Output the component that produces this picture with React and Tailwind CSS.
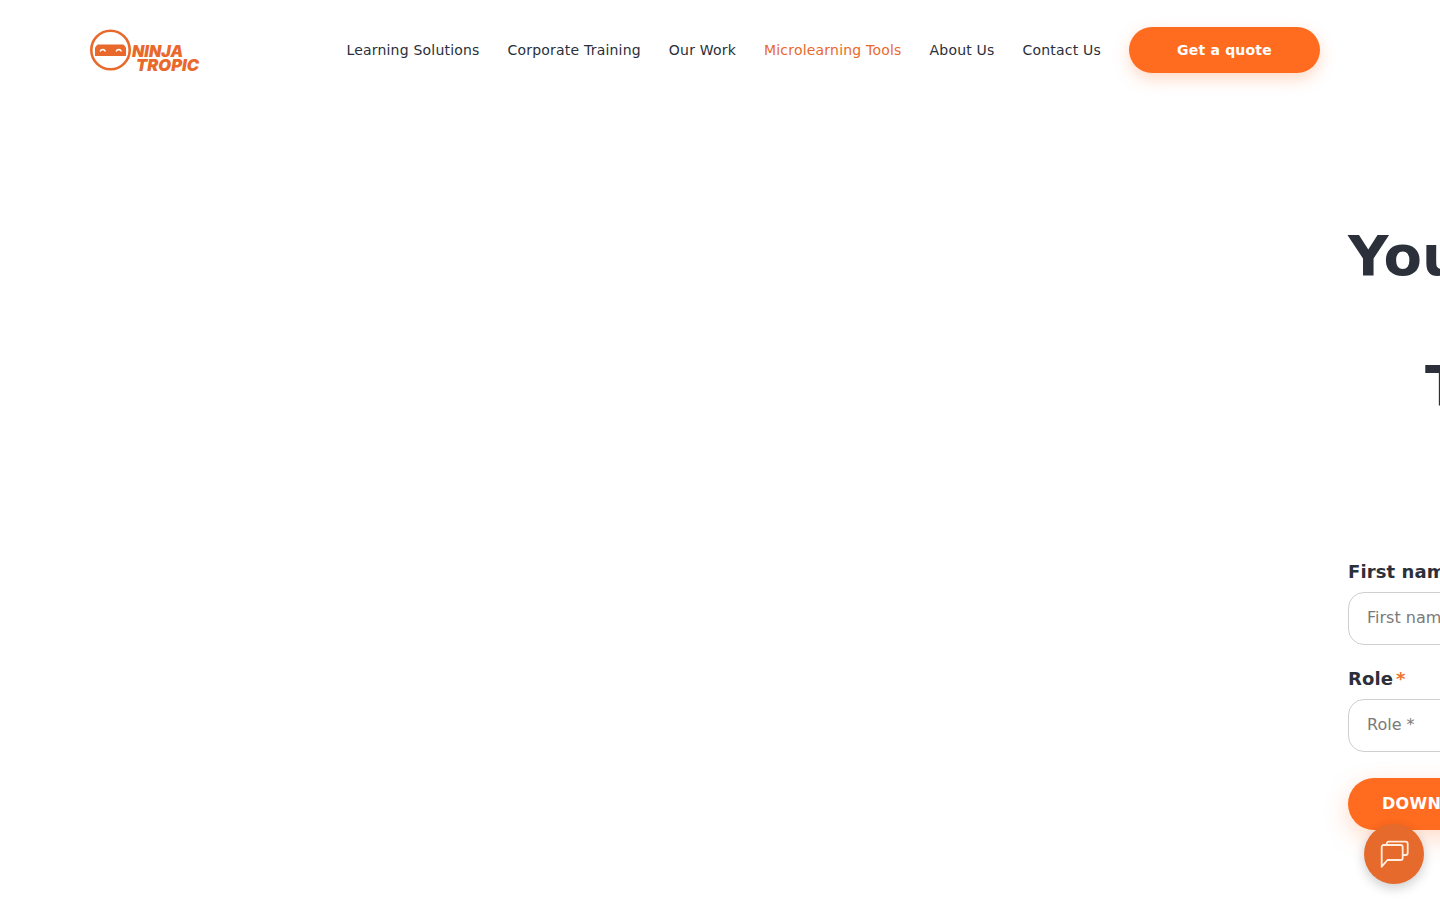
const sans = "font-['DejaVu_Sans',sans-serif]";

function Logo() {
  return (
    <div className="flex items-center">
      <svg width="42" height="42" viewBox="0 0 42 42" className="shrink-0" fill="none">
        <circle cx="21.5" cy="21" r="19.2" stroke="#e9692c" strokeWidth="2.6" />
        <path d="M8.5 15.5h26l2.5 3v8.5h-31v-8.5z" fill="#e9692c" />
        <path d="M11 22.5c1.3-2.6 4.2-2.6 5.5 0M27 22.5c1.3-2.6 4.2-2.6 5.5 0" stroke="#fff" strokeWidth="1.4" />
      </svg>
      <div className="ml-[1px] mt-[16px] flex flex-col font-['Inter',sans-serif] text-[16px] font-black italic leading-[14px] text-[#e9692c]">
        <span>NINJA</span>
        <span className="ml-[4px] text-[16.5px]">TROPIC</span>
      </div>
    </div>
  );
}

function Field({ label, star, placeholder, className = "" }) {
  return (
    <div className={className}>
      <div className="flex h-[27px] items-center whitespace-nowrap text-[18px] font-bold tracking-[0.1px] leading-[27px] text-[#2b303b]">
        {label}
        {star && <span className="ml-[3px] text-[#ee7430]">*</span>}
      </div>
      <div className="mt-[7px] flex h-[53px] w-[400px] items-center rounded-[16px] border border-[#cfcfcf] bg-white pb-[2px] pl-[18px] text-[16px] text-[#7a7a7a]">
        {placeholder}
      </div>
    </div>
  );
}

export default function App() {
  return (
    <div className={`relative h-[900px] w-[1440px] overflow-hidden bg-white ${sans}`}>
      <header className="flex h-[100px] items-center pl-[89px] pr-[120px]">
        <Logo />
        <nav className="ml-auto flex items-center gap-[28px] text-[14px] tracking-[0.2px] text-[#2a2f3a]">
          <a>Learning Solutions</a>
          <a>Corporate Training</a>
          <a>Our Work</a>
          <a className="text-[#e9692c]">Microlearning Tools</a>
          <a>About Us</a>
          <a>Contact Us</a>
          <button className="flex h-[46px] w-[191px] items-center justify-center rounded-full bg-[#ff6b1f] text-[14px] font-bold text-white shadow-[0_6px_16px_rgba(255,107,31,0.25)]">
            Get a quote
          </button>
        </nav>
      </header>

      <main className="w-[2400px] pl-[1348px] pt-[119px]">
        <div className="whitespace-nowrap text-[56px] font-bold leading-[74px] text-[#2b303b]">Your</div>
        <div className="mt-[56px] whitespace-nowrap pl-[77px] text-[56px] font-bold leading-[74px] text-[#2b303b]">The</div>
        <Field className="mt-[135px]" label="First name" placeholder="First name" />
        <Field className="mt-[20px]" label="Role" star placeholder="Role *" />
        <button className="mt-[26px] flex h-[52px] w-[400px] items-center rounded-full bg-[#ff6b1f] pl-[34px] text-[16px] font-bold tracking-[0.3px] text-white shadow-[0_8px_24px_rgba(255,107,31,0.25)]">
          DOWNLOAD
        </button>
      </main>

      <div className="absolute left-[1364px] top-[824px] flex h-[60px] w-[60px] items-center justify-center rounded-full bg-[#e56a2b] shadow-[0_4px_12px_rgba(0,0,0,0.2)]">
        <svg width="30" height="28" viewBox="0 0 30 28" fill="none" stroke="#ffeede" strokeWidth="1.8" strokeLinejoin="round" strokeLinecap="round">
          <path d="M2.7 7a2 2 0 0 1 2-2h17a2 2 0 0 1 2 2v11a2 2 0 0 1-2 2H8.5l-5.8 6.7z" />
          <path d="M7.7 5V3.7a2 2 0 0 1 2-2h17a2 2 0 0 1 2 2V13a2 2 0 0 1-2 2h-3" />
        </svg>
      </div>
    </div>
  );
}
